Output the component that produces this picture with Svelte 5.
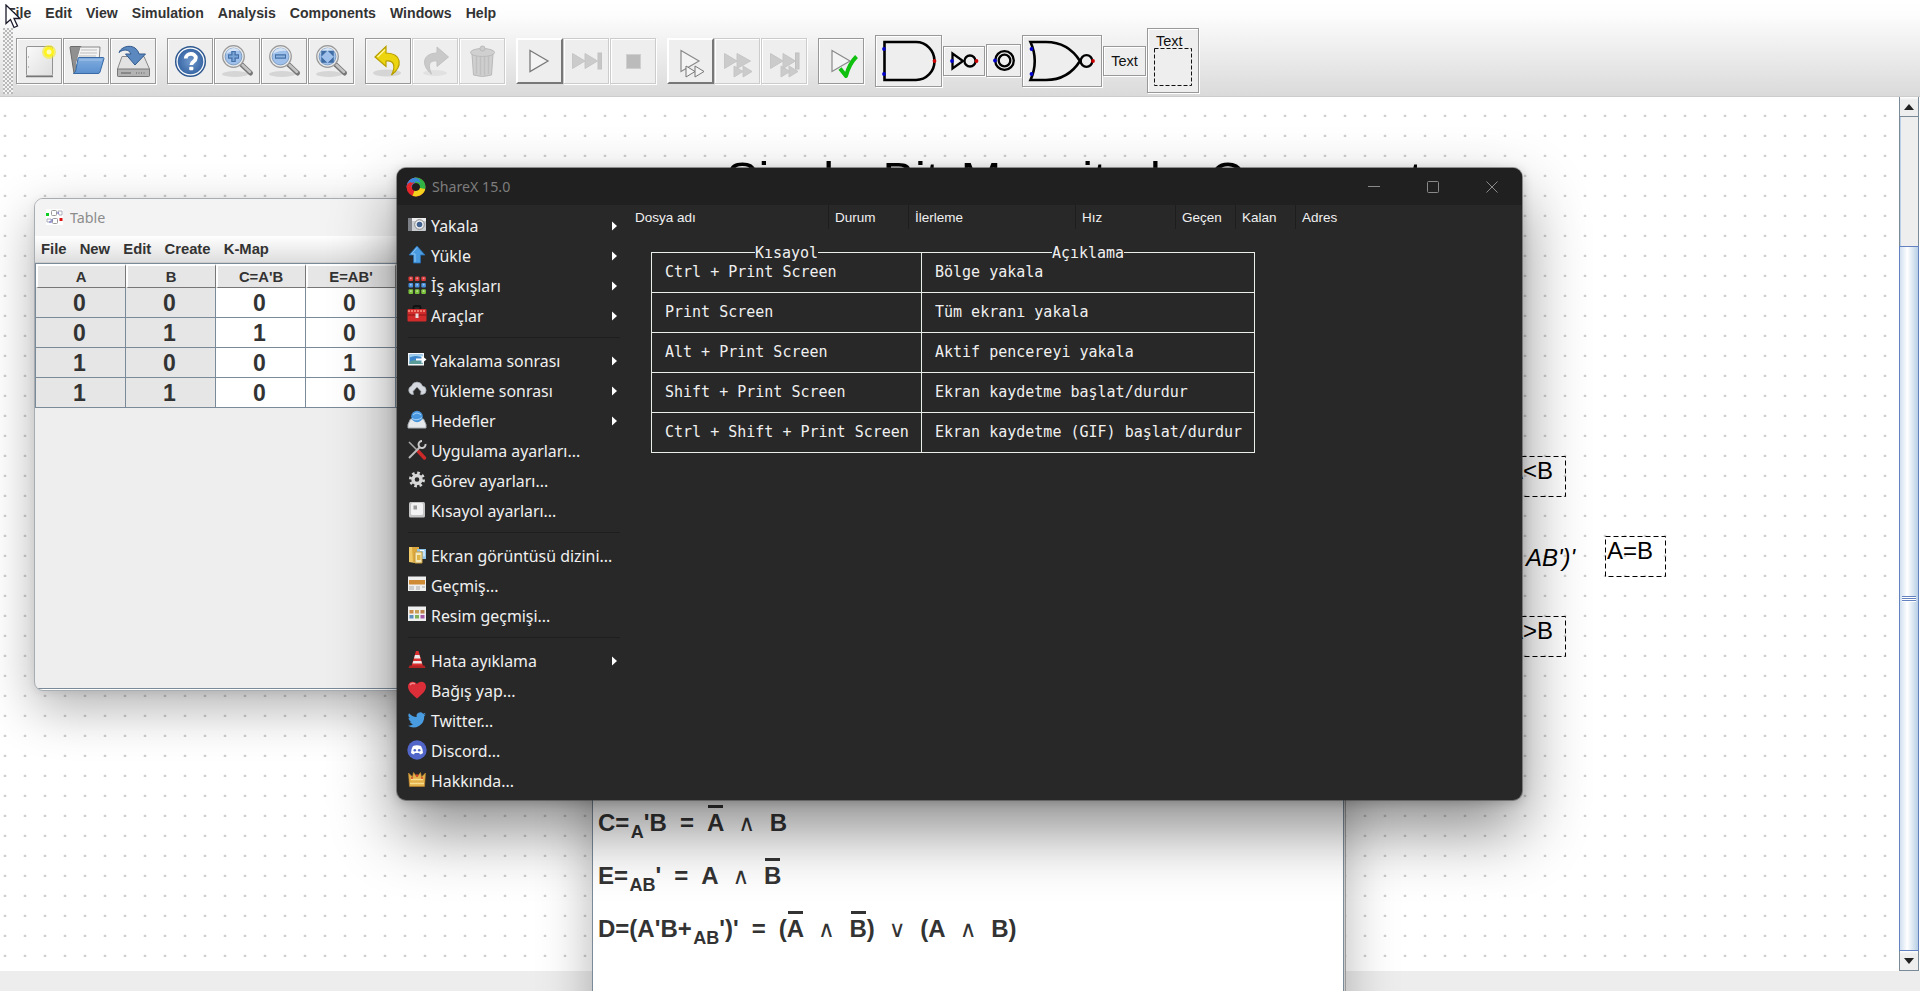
<script>
  const menus = ['File', 'Edit', 'View', 'Simulation', 'Analysis', 'Components', 'Windows', 'Help'];
  const toolGroups = [
    [{ i: 'new' }, { i: 'open' }, { i: 'save' }],
    [{ i: 'help' }, { i: 'zoomin' }, { i: 'zoomout' }, { i: 'zoomfit' }],
    [{ i: 'undo' }, { i: 'redo', s: 'off' }, { i: 'trash', s: 'off' }],
    [{ i: 'play', s: 'raised' }, { i: 'ffstop', s: 'off' }, { i: 'stop', s: 'off' }],
    [{ i: 'playff', s: 'raised' }, { i: 'ff2', s: 'off' }, { i: 'ff3', s: 'off' }],
    [{ i: 'check' }]
  ];
  const tableMenus = ['File', 'New', 'Edit', 'Create', 'K-Map'];
  const cols = ['A', 'B', "C=A'B", "E=AB'"];
  const truth = [[0, 0, 0, 0], [0, 1, 1, 0], [1, 0, 0, 1], [1, 1, 0, 0]];
  const sections = [
    [
      { t: 'Yakala', i: 'camera', sub: true },
      { t: 'Yükle', i: 'up', sub: true },
      { t: 'İş akışları', i: 'grid', sub: true },
      { t: 'Araçlar', i: 'toolbox', sub: true }
    ],
    [
      { t: 'Yakalama sonrası', i: 'after', sub: true },
      { t: 'Yükleme sonrası', i: 'cloud', sub: true },
      { t: 'Hedefler', i: 'drive', sub: true },
      { t: 'Uygulama ayarları...', i: 'tools' },
      { t: 'Görev ayarları...', i: 'gear' },
      { t: 'Kısayol ayarları...', i: 'key' }
    ],
    [
      { t: 'Ekran görüntüsü dizini...', i: 'folder' },
      { t: 'Geçmiş...', i: 'history' },
      { t: 'Resim geçmişi...', i: 'images' }
    ],
    [
      { t: 'Hata ayıklama', i: 'cone', sub: true },
      { t: 'Bağış yap...', i: 'heart' },
      { t: 'Twitter...', i: 'bird' },
      { t: 'Discord...', i: 'discord' },
      { t: 'Hakkında...', i: 'crown' }
    ]
  ];
  const listCols = [
    ['Dosya adı', 199], ['Durum', 80], ['İlerleme', 167], ['Hız', 100], ['Geçen', 60], ['Kalan', 60], ['Adres', 225]
  ];
  const keys = [
    ['Ctrl + Print Screen', 'Bölge yakala'],
    ['Print Screen', 'Tüm ekranı yakala'],
    ['Alt + Print Screen', 'Aktif pencereyi yakala'],
    ['Shift + Print Screen', 'Ekran kaydetme başlat/durdur'],
    ['Ctrl + Shift + Print Screen', 'Ekran kaydetme (GIF) başlat/durdur']
  ];
  const dots = [0, 1, 2];
  const dotColors = ['#d83a3a', '#4a8fdc', '#7cc33c'];
  const thumbs = ['#c98b4a', '#c9a05a', '#b9814b', '#5a8fc0', '#7fb05a', '#a55aa8'];
</script>

{#snippet lens()}
  <ellipse cx="21" cy="36" rx="13" ry="3" fill="#000" opacity=".1" />
  <path d="M27.500 26.500L36.500 35" stroke="#777" stroke-width="5" stroke-linecap="round" />
  <path d="M28.500 27L36 34" stroke="#c4c4c4" stroke-width="2.500" stroke-linecap="round" />
  <circle cx="19.500" cy="18.500" r="10.800" fill="#e9e9e9" stroke="#999" stroke-width="1.200" />
  <circle cx="19.500" cy="18.500" r="8.400" fill="#9fc0ea" stroke="#7f9fc4" stroke-width="1" />
  <path d="M12 16a8 8 0 0 1 14-3q-8-1-14 3z" fill="#d5e4f6" />
{/snippet}

{#snippet tool(i)}
  <svg width="46" height="46" viewBox="0 0 46 46" fill="none">
    {#if i === 'new'}
      <rect x="10.500" y="8.500" width="26" height="29.500" rx="1.500" fill="url(#paper)" stroke="#929292" />
      <path d="M10 38.500h27" stroke="#777" stroke-width="1.500" />
      <circle cx="33" cy="14" r="7" fill="#f7ec28" opacity=".6" />
      <circle cx="33" cy="14" r="5" fill="#fff41a" />
      <circle cx="33" cy="14" r="2.500" fill="#fffbb8" />
      <path d="M12.500 18v2M12.500 28v2" stroke="#bbb" />
    {:else if i === 'open'}
      <path d="M7 9.500q0-1 1-1h10l2 3v24H11z" fill="#909090" stroke="#6b6b6b" />
      <path d="M12 27l5-18h20l-1 16z" fill="#f4f4f4" stroke="#888" />
      <path d="M18 12h16M17 15h17M16 18h17" stroke="#bdbdbd" />
      <path d="M15 20.500q0-1 1-1h24q1 0 1 1L37 34q-.500 1.500-2 1.500H10.500q2-1 2.500-4z" fill="url(#blue)" stroke="#386aa5" />
      <path d="M16 22h23" stroke="#a7c6ea" />
    {:else if i === 'save'}
      <path d="M12 18.500h22L39.500 31v7H7.500v-7z" fill="#e2e2e2" stroke="#888" />
      <path d="M7.500 31h32v6.500q0 1-1 1h-30q-1 0-1-1z" fill="#b3b3b3" stroke="#777" />
      <path d="M11 35h10" stroke="#888" stroke-width="2" /><path d="M26 35h10" stroke="#888" stroke-width="2" stroke-dasharray="1 1.500" />
      <path d="M9 14.500C12 7 26 5 29 16h6.500L25 27 15.500 16H21c-2-5-8-5-12-1.500z" fill="#5b88be" stroke="#31598c" />
    {:else if i === 'help'}
      <circle cx="23.500" cy="23.500" r="14.800" fill="#fff" stroke="#2e588f" stroke-width="1.500" />
      <circle cx="23.500" cy="23.500" r="12.800" fill="url(#blue2)" />
      <path d="M18.800 20.500c0-6 10-6 10-.500 0 4-4.500 3.500-4.500 7" stroke="#fff" stroke-width="3.800" />
      <rect x="22.200" y="28.700" width="4.200" height="3.600" rx="1" fill="#fff" />
    {:else if i === 'zoomin'}
      {@render lens()}
      <path d="M19.500 13v11M14 18.500h11" stroke="#4470a6" stroke-width="4.500" /><path d="M19.500 14v9M15 18.500h9" stroke="#7aa4d8" stroke-width="2" />
    {:else if i === 'zoomout'}
      {@render lens()}
      <path d="M14 18.500h11" stroke="#4470a6" stroke-width="4.500" /><path d="M15 18.500h9" stroke="#8fb4e2" stroke-width="2" />
    {:else if i === 'zoomfit'}
      {@render lens()}
      <path d="M14 17v-3.500h3.500zM21.500 13.500H25V17zM14 20.500V24h3.500zM25 20.500V24h-3.500z" fill="#3f6ca3" stroke="#3f6ca3" stroke-width="1.500" />
    {:else if i === 'undo'}
      <ellipse cx="22" cy="35" rx="14" ry="3.500" fill="#000" opacity=".1" />
      <path d="M21 8.500L10 19l11 9.500V23c8-1 10 5 5.500 14C38 28 37 15.500 21 15z" fill="#ecd40f" stroke="#b79e00" stroke-width="1.200" />
      <path d="M20 11.500L12.500 19" stroke="#fff59a" stroke-width="1.500" />
    {:else if i === 'redo'}
      <ellipse cx="23" cy="35" rx="12" ry="3" fill="#000" opacity=".05" />
      <path d="M25 9l11.500 10L25 28.500V23c-8-1-9.500 4-5.500 13C9 27.500 10 15.500 25 15z" fill="#c9c9c9" stroke="#c2c2c2" />
    {:else if i === 'trash'}
      <path d="M13 16h21l-1.500 21q-9 3-18 0z" fill="#cfcfcf" stroke="#b9b9b9" />
      <path d="M17.500 18v18M21.500 18v19M25.500 18v19M29.500 18v18" stroke="#c0c0c0" stroke-width="1.500" />
      <ellipse cx="23.500" cy="14.500" rx="12" ry="4" fill="#d0d0d0" stroke="#bbb" />
      <circle cx="23.500" cy="10.500" r="2.500" fill="#ccc" stroke="#bbb" />
    {:else if i === 'play'}
      <path d="M14 12.500L32 23 14 33.500z" fill="#f4f4f4" stroke="#7a7a7a" stroke-width="1.300" />
    {:else if i === 'ffstop'}
      <path d="M9.500 15.500L22 23 9.500 30.500zM22 15.500L34.500 23 22 30.500z" fill="#cbcbcb" stroke="#c6c6c6" />
      <rect x="35" y="15" width="3.500" height="16" fill="#c6c6c6" stroke="#c2c2c2" />
    {:else if i === 'stop'}
      <rect x="16.500" y="16.500" width="14" height="14" fill="#bbb" stroke="#cfcfcf" />
    {:else if i === 'playff'}
      <path d="M14 12.500L32 23 14 33.500z" fill="#f4f4f4" stroke="#8a8a8a" stroke-width="1.200" />
      <path d="M19 28l9 5.500-9 5.500zM28 28l9 5.500-9 5.500z" fill="#f4f4f4" stroke="#777" />
    {:else if i === 'ff2'}
      <path d="M10.500 15.500L23 23 10.500 30.500zM23 15.500L36.500 23 23 30.500zM20 28l9 5.500-9 5.500zM29 28l9 5.500-9 5.500z" fill="#cbcbcb" stroke="#c6c6c6" />
    {:else if i === 'ff3'}
      <path d="M9.500 15.500L22 23 9.500 30.500zM22 15.500L34.500 23 22 30.500zM20 28l9 5.500-9 5.500zM28 28l9 5.500-9 5.500z" fill="#cbcbcb" stroke="#c6c6c6" />
      <rect x="34.500" y="15" width="3.500" height="16" fill="#c9c9c9" stroke="#c0c0c0" />
    {:else}
      <path d="M14 12.500L32 23 14 33.500z" fill="#f4f4f4" stroke="#8a8a8a" stroke-width="1.200" />
      <path d="M22 30.500l6 7.500q3-12 10.500-19.500" stroke="#0fc00f" stroke-width="4" stroke-linejoin="round" />
    {/if}
  </svg>
{/snippet}

{#snippet micon(i)}
  <svg width="20" height="20" viewBox="0 0 20 20" fill="none">
    {#if i === 'camera'}
      <rect x="1" y="3" width="18" height="13" rx="1" fill="#c9ccd0" /><rect x="1" y="3" width="18" height="3" fill="#eee" /><path d="M1 3h4v13H1z" fill="#7c8086" />
      <circle cx="12.500" cy="9.500" r="4.800" fill="#eef0f2" stroke="#888" /><circle cx="12.500" cy="9.500" r="2.800" fill="#41618e" />
    {:else if i === 'up'}
      <path d="M10 1l8 9h-4.500v8h-7v-8H2z" fill="#4a9be0" stroke="#276db0" stroke-width=".8" /><path d="M10 2.500L4.500 9h3.500v8" stroke="#8cc6f2" />
    {:else if i === 'grid'}
      {#each dots as r}{#each dots as c}<rect x={1.500 + c * 6.400} y={1.500 + r * 6.400} width="4.600" height="4.600" rx="1" fill={dotColors[r]} /><rect x={3 + c * 6.400} y={2.500 + r * 6.400} width="1.600" height="1.600" fill="#fff" opacity=".5" />{/each}{/each}
    {:else if i === 'toolbox'}
      <path d="M6.500 5V2.500q0-1.500 1.500-1.500h4q1.500 0 1.500 1.500V5" stroke="#111" stroke-width="1.800" />
      <rect x="0.500" y="4" width="19" height="12.500" rx="1" fill="#d22b2b" /><path d="M1 6h18" stroke="#f07a6c" stroke-width="2" stroke-dasharray="2 1" /><path d="M0.500 10h19" stroke="#8d1515" /><rect x="8.500" y="8.500" width="3" height="4.500" fill="#e8dada" />
    {:else if i === 'after'}
      <rect x="1" y="3" width="16" height="12.500" fill="#f4f6f8" /><rect x="2.500" y="4.500" width="13" height="9.500" fill="#3d86cc" /><path d="M2.500 7.500q6-3 13 0v-3h-13z" fill="#9fd0f0" /><path d="M2.500 11.500q6-3 13 0V14h-13z" fill="#5a9c9a" /><path d="M9 8.500h5.500V5.500l5 4-5 4v-3H9z" fill="#fff" />
    {:else if i === 'cloud'}
      <path d="M5 14.500A4.500 4.500 0 0 1 4.500 6a5.800 5.800 0 0 1 11 0A4.300 4.300 0 0 1 15.500 14.500h-2l.5-3-4-4.500-4 4.500.5 3z" fill="#d5d9df" stroke="#9aa0a8" stroke-width=".7" />
    {:else if i === 'drive'}
      <path d="M3.500 9h13L19 14.500v3.500H1v-3.500z" fill="#e6e9ec" stroke="#a9afb5" /><circle cx="10" cy="6.500" r="5.800" fill="#4897de" /><path d="M6 5q4-4 8 0M5 8.500q5 3 10-1" stroke="#a6d3f5" />
    {:else if i === 'tools'}
      <path d="M2 2l9 9" stroke="#aaa" stroke-width="1.600" /><path d="M11 11l6.500 7" stroke="#cc2929" stroke-width="3.400" stroke-linecap="round" />
      <path d="M2 18L13 7" stroke="#bbb" stroke-width="2" /><path d="M18.500 4a3.500 3.500 0 1 1-3.500-3" stroke="#ccc" stroke-width="2" />
    {:else if i === 'gear'}
      <circle cx="10" cy="9.500" r="4" stroke="#d7d7d7" stroke-width="3.400" /><circle cx="10" cy="9.500" r="6.600" stroke="#d7d7d7" stroke-width="2.800" stroke-dasharray="2.600 2.584" />
    {:else if i === 'key'}
      <rect x="2" y="2" width="16" height="15.500" rx="1.500" fill="#c4c4c4" /><rect x="4" y="3" width="12" height="12" rx="1.500" fill="#f2f2f2" /><rect x="6.500" y="5.500" width="3.500" height="4" fill="#999" />
    {:else if i === 'folder'}
      <path d="M2 2h6v16l-6-1z" fill="#efca66" /><path d="M5 2h7v15H6z" fill="#dca73c" /><path d="M10 4h9v10h-9z" fill="#8fc3ea" /><path d="M8 7h7v11H8z" fill="#f4e7b8" stroke="#c79c3c" /><path d="M10 10h3.500v5H10z" fill="#e0b548" /><path d="M13 5.500h4v6" stroke="#fff" />
    {:else if i === 'history'}
      <rect x="1" y="1.500" width="18" height="14.500" fill="#efefef" /><rect x="2" y="5" width="16" height="4.500" fill="#cf8a35" /><path d="M2 12h5M9 12h4M15 12h3M2 14h5M9 14h4" stroke="#aaa" />
    {:else if i === 'images'}
      <rect x="1" y="1.500" width="18" height="14.500" fill="#efefef" />
      {#each thumbs as c, k}<rect x={2.500 + (k % 3) * 5.500} y={5 + Math.floor(k / 3) * 5} width="4" height="3.500" fill={c} />{/each}
    {:else if i === 'cone'}
      <path d="M9 1h2.500L16 16H4.500z" fill="#dc2f2f" /><path d="M8 5h4.500l1 3.500h-6.500zM6.300 11h8l.8 2.500H5.500z" fill="#eceaea" /><path d="M2.500 15.500h15l1 2.500H1.500z" fill="#b32323" />
    {:else if i === 'heart'}
      <path d="M10 18.500C4 13.500 1 10.500 1 6.500 1 1.500 7 .200 10 4c3-3.800 9-2.500 9 2.500 0 4-3 7-9 12z" fill="#dc2e38" /><path d="M3 5q2-3 5-1" stroke="#f28b8b" stroke-width="1.500" />
    {:else if i === 'bird'}
      <path d="M19 4.200c-.7.300-1.400.500-2.100.6.800-.500 1.300-1.200 1.600-2-.7.400-1.500.7-2.400.9a3.700 3.700 0 0 0-6.400 3.400A10.600 10.600 0 0 1 2 3.200a3.700 3.700 0 0 0 1.200 5c-.6 0-1.200-.200-1.700-.500 0 1.900 1.300 3.400 3 3.700-.500.200-1.100.200-1.700.100.500 1.500 1.900 2.600 3.500 2.600A7.500 7.500 0 0 1 .900 15.700 10.600 10.600 0 0 0 17.200 6.200c.7-.500 1.300-1.200 1.800-2z" fill="#4a9ce0" />
    {:else if i === 'discord'}
      <circle cx="10" cy="10" r="9.700" fill="#5166c8" /><path d="M6 6q4-1.500 8 0 2 3 2 7-1.500 1.300-3 1.500l-.8-1.500H7.800L7 14.500q-1.500-.200-3-1.500 0-4 2-7z" fill="#fff" /><circle cx="7.800" cy="10.300" r="1.300" fill="#5166c8" /><circle cx="12.200" cy="10.300" r="1.300" fill="#5166c8" />
    {:else}
      <path d="M1.500 3l4 4L6.500 2.500 10 7l3.500-4.500L14.500 7l4-4-1 13.500h-15z" fill="#e3b04a" stroke="#c2882b" stroke-width=".6" /><path d="M3 13.500h14M4 9.500h12" stroke="#f8dc8c" stroke-width="1.500" /><circle cx="10" cy="5.500" r="1.200" fill="#d8452f" /><circle cx="5" cy="8" r="1" fill="#d8452f" /><circle cx="15" cy="8" r="1" fill="#d8452f" />
    {/if}
  </svg>
{/snippet}

<main>
  <svg width="0" height="0" class="defs">
    <defs>
      <linearGradient id="paper" x1="0" y1="0" x2="1" y2="1"><stop offset="0" stop-color="#fafafa" /><stop offset="1" stop-color="#dedede" /></linearGradient>
      <linearGradient id="blue" x1="0" y1="0" x2="0" y2="1"><stop offset="0" stop-color="#82aee0" /><stop offset="1" stop-color="#5a8fce" /></linearGradient>
      <radialGradient id="blue2"><stop offset="0" stop-color="#6f98cc" /><stop offset="1" stop-color="#3a68a6" /></radialGradient>
    </defs>
  </svg>

  <header>
    <nav>{#each menus as m}<span>{m}</span>{/each}</nav>
    <div class="bar">
      <i class="grip"></i>
      {#each toolGroups as g}
        <div class="group">
          {#each g as b}<button class={b.s ?? ''} aria-label={b.i}>{@render tool(b.i)}</button>{/each}
        </div>
      {/each}
      <div class="gates">
        <button aria-label="and"><svg width="65" height="50" fill="none"><path d="M8.500 6H40a18.500 19 0 0 1 0 38H8.500z" stroke="#000" stroke-width="2.600" /><circle cx="8" cy="13" r="1.900" fill="#00c" /><circle cx="8" cy="38" r="1.900" fill="#00c" /><circle cx="58.500" cy="25" r="1.900" fill="#c00" /></svg></button>
        <button aria-label="not"><svg width="40" height="28" fill="none"><path d="M8.500 6.500v15l10.500-7.500z" stroke="#000" stroke-width="2.300" /><circle cx="26" cy="14" r="5.500" stroke="#000" stroke-width="2.300" /><circle cx="8" cy="14" r="1.900" fill="#00c" /><circle cx="32.500" cy="14" r="1.900" fill="#c00" /></svg></button>
        <button aria-label="input"><svg width="33" height="31" fill="none"><circle cx="17.500" cy="15.500" r="9.300" stroke="#000" stroke-width="2.300" /><circle cx="17.500" cy="15.500" r="5.800" stroke="#000" stroke-width="2.300" /><circle cx="8" cy="15.500" r="1.900" fill="#00c" /></svg></button>
        <button aria-label="nor"><svg width="78" height="50" fill="none"><path d="M7.500 6H23C40 6 50 14 57 25 50 36 40 44 23 44H7.500Q16 25 7.500 6z" stroke="#000" stroke-width="2.600" /><circle cx="63.500" cy="25" r="5.800" stroke="#000" stroke-width="2.300" /><circle cx="8.500" cy="13" r="1.900" fill="#00c" /><circle cx="8.500" cy="38" r="1.900" fill="#00c" /><circle cx="70" cy="25" r="1.900" fill="#c00" /></svg></button>
        <button class="txt">Text</button>
        <button class="txtbox"><span>Text</span><svg width="38" height="38" fill="none"><rect x=".5" y=".5" width="37" height="37" stroke="#111" stroke-dasharray="4 2" /></svg></button>
      </div>
    </div>
  </header>

  <div class="work">
    <div class="canvas">
      <div class="title">Single Bit Magnitude Comparator</div>
      <div class="lbl" style:left="1505px" style:top="359px"><svg width="62" height="41"><rect x=".5" y=".5" width="60" height="40" /></svg>A&lt;B</div>
      <div class="ital">AB')'</div>
      <div class="lbl" style:left="1605px" style:top="439px"><svg width="62" height="41"><rect x=".5" y=".5" width="60" height="40" /></svg>A=B</div>
      <div class="lbl" style:left="1505px" style:top="519px"><svg width="62" height="41"><rect x=".5" y=".5" width="60" height="40" /></svg>A&gt;B</div>
    </div>
    <aside>
      <div class="arrow"><svg width="10" height="6"><path d="M5 0L10 6H0z" fill="#222" /></svg></div>
      <div class="track"></div>
      <div class="thumb"><i></i><i></i><i></i></div>
      <div class="arrow"><svg width="10" height="6"><path d="M5 6L10 0H0z" fill="#222" /></svg></div>
    </aside>
  </div>
  <footer></footer>

  <section class="tablewin">
    <div class="ttitle">
      <svg width="17" height="16" fill="none"><rect width="17" height="16" fill="#fff" /><rect x="5.500" y="1.500" width="5" height="5" rx="1" stroke="#999" /><rect x="6.500" y="9.500" width="5" height="5" rx="1" stroke="#999" /><path d="M12 2h4v4h-3zM1 10h4v3H1z" stroke="#aab" /><path d="M11 4h2M5 11h2M3 13h3" stroke="#66c" /><rect x="0" y="4" width="3" height="3" fill="#1c2" /><rect x="13.500" y="9" width="3" height="3" fill="#d11" /></svg>
      <span>Table</span>
    </div>
    <div class="tmenu">{#each tableMenus as m}<span>{m}</span>{/each}</div>
    <div class="grid head">{#each cols as c}<b>{c}</b>{/each}<b></b></div>
    {#each truth as r}
      <div class="grid">{#each r as v, k}<span class:in={k < 2}>{v}</span>{/each}<span></span></div>
    {/each}
  </section>

  <section class="expr">
    <p>C=<sub>A</sub>'B<em>=</em><u>A</u><s>∧</s>B</p>
    <p>E=<sub>AB</sub>'<em>=</em>A<s>∧</s><u>B</u></p>
    <p>D=(A'B+<sub>AB</sub>')'<em>=</em>(<u>A</u><s>∧</s><u>B</u>)<s>∨</s>(A<s>∧</s>B)</p>
  </section>

  <section class="sharex">
    <div class="stitle">
      <svg width="20" height="20" fill="none"><circle cx="10" cy="10" r="6.800" stroke="#e5262b" stroke-width="5.400" />
        <path d="M3.200 10A6.800 6.800 0 0 1 10 3.200" stroke="#3a86dd" stroke-width="5.400" />
        <path d="M8.500 3.400A6.800 6.800 0 0 1 16.800 10q0 1.500-.6 2.800" stroke="#2fb344" stroke-width="5.400" />
        <path d="M16.600 11.500A6.800 6.800 0 0 1 7.500 16.300" stroke="#f2d21c" stroke-width="5.400" />
        <path d="M.600 9Q3 3.500 8.500 5.500 4.500 7.500 5.500 12L3 14Q.500 12 .600 9z" fill="#e5262b" />
        <path d="M3 3.500Q8-.800 13 2l1.500 4.500Q10 3 6 6z" fill="#3a86dd" /></svg>
      <span>ShareX 15.0</span>
      <div class="ctl">
        <svg width="12" height="12" stroke="#8a8a8a" fill="none"><path d="M0 5.500h12" /></svg>
        <svg width="12" height="12" stroke="#8a8a8a" fill="none"><rect x=".5" y=".5" width="11" height="11" rx="1" /></svg>
        <svg width="12" height="12" stroke="#8a8a8a" fill="none"><path d="M.500.500l11 11M11.500.500l-11 11" /></svg>
      </div>
    </div>
    <div class="body">
      <div class="menu">
        {#each sections as s, n}
          {#if n}<div class="sep"></div>{/if}
          {#each s as m}
            <div class="item">{@render micon(m.i)}<span>{m.t}</span>{#if m.sub}<svg class="sub" width="5" height="10"><path d="M0 0.500L5 5 0 9.500z" fill="#fff" /></svg>{/if}</div>
          {/each}
        {/each}
      </div>
      <div class="main">
        <div class="lhead">{#each listCols as c}<span style:width="{c[1]}px">{c[0]}</span>{/each}</div>
        <table>
          <thead><tr><th><span>Kısayol</span></th><th><span>Açıklama</span></th></tr></thead>
          <tbody>{#each keys as k}<tr><td>{k[0]}</td><td>{k[1]}</td></tr>{/each}</tbody>
        </table>
      </div>
    </div>
  </section>

  <svg class="cursor" width="18" height="26"><path d="M1 1v18.500l4.500-4 3.500 8 3.500-1.500-3.500-7.500h6z" fill="#fff" stroke="#1a1a2a" stroke-width="1.300" /></svg>
</main>

<style>
  :global(body) { margin: 0; overflow: hidden; }
  main { position: relative; width: 1920px; height: 991px; overflow: hidden; background: #fff; font-family: "Liberation Sans", Arial, sans-serif; color: #333; display: flex; flex-direction: column; }
  .defs { position: absolute; }
  header { height: 97px; box-sizing: border-box; background: linear-gradient(#fff, #fdfdfd 15%, #dadada); border-bottom: 1px solid #ccc; }
  nav { display: flex; gap: 14px; height: 26px; padding-left: 7px; font: bold 14.100px/27px "Liberation Sans", Arial, sans-serif; }
  .bar { display: flex; align-items: center; height: 69px; padding-left: 3px; gap: 11px; }
  .grip { width: 10px; height: 66px; margin-right: -8px; background: radial-gradient(circle at 1px 1px, #999 .6px, transparent .9px) 0 0/4px 4px, radial-gradient(circle at 3px 3px, #999 .6px, transparent .9px) 0 0/4px 4px, #f4f4f4; }
  .group { display: flex; gap: 1px; }
  .gates { display: flex; gap: 1px; align-items: center; }
  button { box-sizing: border-box; margin: 0; padding: 0; border: 1px solid #999; background: #eee; box-shadow: 1px 1px 0 #fff, inset 1px 1px 0 #fff; display: block; }
  button svg { display: block; }
  .group button { width: 46px; height: 46px; }
  .group button svg { margin: -1px; }
  .group .off { border-color: #ccc; }
  .group .raised { border-color: #fff #777 #777 #fff; border-width: 2px; box-shadow: none; width: 47px; margin-right: -1px; }
  .group .raised svg { margin: -2px; }
  .txt { width: 43px; height: 30px; font: 14.500px "Liberation Sans", Arial, sans-serif; color: #111; }
  .txtbox { width: 52px; height: 65px; font: 14.500px/16px "Liberation Sans", Arial, sans-serif; color: #111; text-align: left; padding: 0 6px 3px; }
  .txtbox span { padding-left: 2px; display: block; height: 15px; }
  .work { display: flex; height: 874px; }
  .canvas { position: relative; width: 1899px; background: radial-gradient(circle at 5px 19px, #cfcfcf 1px, #f4f4f4 1.600px, transparent 2px) 0 0/20px 20px; color: #000; }
  .title { position: absolute; left: 726px; top: 54px; font-size: 48.600px; line-height: 56px; word-spacing: 8px; white-space: nowrap; }
  .lbl { position: absolute; font-size: 24px; line-height: 29px; padding-left: 2px; white-space: nowrap; }
  .lbl svg { position: absolute; left: 0; top: 0; fill: none; stroke: #000; stroke-dasharray: 5 3; }
  .ital { position: absolute; left: 1526px; top: 447px; font: italic 24px/28px "Liberation Sans", Arial, sans-serif; }
  aside { width: 20px; display: flex; flex-direction: column; box-sizing: border-box; border-left: 1px solid #7a8a99; border-right: 1px solid #7a8a99; background: #eee; margin-right: 1px; }
  .arrow { height: 20px; box-sizing: border-box; background: linear-gradient(#fff, #eee 15%); border-bottom: 1px solid #7a8a99; display: flex; align-items: center; justify-content: center; }
  .track { height: 129px; border-left: 1px solid #b8cfe5; }
  .thumb { flex: 1; margin: 0 -1px; border: 1px solid #6382bf; background: linear-gradient(90deg, #d0dfef, #fff 40%, #b8cfe5); display: flex; flex-direction: column; align-items: center; justify-content: center; }
  .thumb i { width: 14px; height: 1px; background: #6382bf; border-bottom: 1px solid #fff; }
  footer { flex: 1; background: #ededed; }

  .tablewin { position: absolute; left: 34px; top: 198px; width: 500px; height: 493px; box-sizing: border-box; border: 1px solid #a8adb2; border-radius: 9px; background: #eee; overflow: hidden; box-shadow: 0 18px 50px rgba(0,0,0,.3), 0 2px 8px rgba(0,0,0,.08); }
  .tablewin::after { content: ""; display: block; position: absolute; left: 0; right: 0; bottom: 0; height: 1px; background: #7a8a99; border-bottom: 1px solid #fff; }
  .ttitle { height: 37px; background: #f3f3f3; display: flex; align-items: center; gap: 7px; padding: 0 0 1px 11px; box-sizing: border-box; font: 14.300px "Noto Sans", sans-serif; color: #8c8c8c; }
  .tmenu { height: 26px; background: linear-gradient(#fff, #dedede); border-bottom: 1px solid #ccc; display: flex; gap: 13.200px; padding-left: 6px; font: bold 14.800px/27px "Liberation Sans", Arial, sans-serif; }
  .grid { display: grid; grid-template-columns: repeat(5, 90px); height: 30px; font: bold 23px/30px "Liberation Sans", Arial, sans-serif; text-align: center; border-left: 1px solid #7a8a99; }
  .grid span { background: #fff; border: solid #7a8a99; border-width: 0 1px 1px 0; padding-right: 2px; box-sizing: border-box; height: 30px; }
  .grid .in { background: #e6e6e6; }
  .head { height: 25px; font-size: 14.800px; box-sizing: border-box; border-top: 1px solid #7a8a99; }
  .head b { background: #e6e6e6; border: solid; border-width: 2px 1px 1px 2px; border-color: #fff #777 #777 #fff; box-sizing: border-box; height: 24px; line-height: 22px; padding-right: 1px; }

  .expr { position: absolute; left: 592px; top: 700px; width: 752px; height: 400px; box-sizing: border-box; border: 1px solid #7a8a99; background: #fff; padding: 105px 0 0 5px; box-shadow: 1px 0 0 #ccc, 2px 0 0 #999, 0 18px 50px rgba(0,0,0,.3); }
  .expr p { margin: 0; height: 53px; font-weight: bold; font-size: 24px; line-height: 34px; white-space: nowrap; }
  sub { font-size: 18px; line-height: 18px; vertical-align: baseline; position: relative; top: 7px; margin: 0 0 0 1.500px; }
  em { font-style: normal; margin: 0 13px 0 13px; }
  s { text-decoration: none; font: 23px "DejaVu Sans", sans-serif; display: inline-block; width: 19px; margin: 0 12.500px 0 14px; line-height: 20px; }
  u { text-decoration: none; position: relative; }
  u::before { content: ""; position: absolute; left: 1px; right: 1px; top: -4px; height: 3px; background: #333; }

  .sharex { position: absolute; left: 397px; top: 168px; width: 1125px; height: 632px; border-radius: 9px; background: #282828; overflow: hidden; color: #f0f0f0; box-shadow: 0 0 0 1px rgba(60,60,60,.5), 0 30px 65px rgba(0,0,0,.46), 0 2px 12px rgba(0,0,0,.2); }
  .stitle { height: 37px; background: #202020; display: flex; align-items: center; gap: 6px; padding: 0 24px 0 9px; font: 14.200px "Noto Sans", sans-serif; color: #7d7d7d; }
  .ctl { margin-left: auto; display: flex; gap: 47px; }
  .body { display: flex; }
  .menu { width: 228px; padding-top: 6px; }
  .item { height: 30px; display: flex; align-items: center; padding: 0 2px 0 10px; font: 15.900px/30px "Noto Sans", sans-serif; }
  .item span { margin: 0 0 0 4px; white-space: nowrap; }
  .item svg:first-child { margin-top: -3px; flex: none; }
  .item .sub { margin-left: auto; margin-right: 6px; margin-top: -1px; }
  .sep { height: 1px; margin: 6px 0 8px 11px; width: 212px; background: #1e1e1e; }
  .main { flex: 1; }
  .lhead { display: flex; height: 24px; margin-left: 5px; font-size: 13.500px; line-height: 25px; white-space: nowrap; }
  .lhead span { box-sizing: border-box; border-right: 1px solid #1d1d1d; padding-left: 6px; }
  .lhead span:last-child { border: 0; }
  .lhead span:first-child { padding-left: 5px; }
  table { border-collapse: collapse; margin: 23px 0 0 26px; font: 15px/20px "DejaVu Sans Mono", monospace; table-layout: fixed; width: 604px; white-space: nowrap; }
  td, th { border: 1px solid #e8eee8; height: 40px; box-sizing: border-box; padding: 0 0 0 13px; }
  tbody tr:first-child td { border-top: 0; height: 39px; }
  th { border-bottom: 0; height: 0; padding: 0; font-weight: normal; line-height: 0; }
  th:first-child { width: 270px; }
  th span { display: inline-block; height: 16px; line-height: 16px; margin: -8px 0; vertical-align: top; background: #282828; position: relative; z-index: 1; }
  .cursor { position: absolute; left: 5px; top: 4px; }
</style>
